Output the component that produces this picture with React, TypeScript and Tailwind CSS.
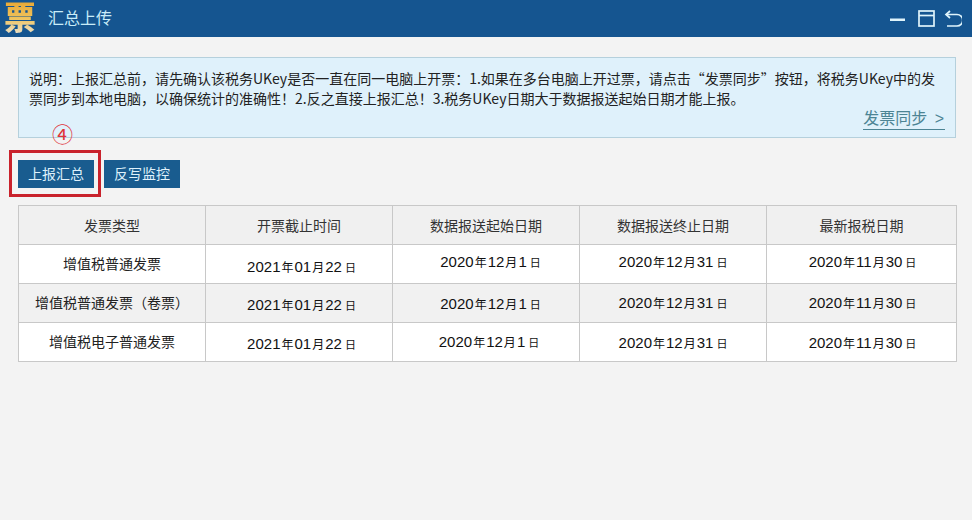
import React from 'react';

const font = { fontFamily: '"Liberation Sans", "Noto Sans CJK SC", sans-serif' };

const headers = ['发票类型', '开票截止时间', '数据报送起始日期', '数据报送终止日期', '最新报税日期'];

const DateText: React.FC<{ y: string; m: string; d: string }> = ({ y, m, d }) => (
  <span className="text-[15px] text-[#111]">
    {y}
    <span className="mx-[1px] text-[12px]">年</span>
    {m}
    <span className="mx-[1px] text-[12px]">月</span>
    {d}
    <span className="ml-[3px] text-[11px]">日</span>
  </span>
);

const rows = [
  {
    name: '增值税普通发票',
    bg: 'bg-white',
    cells: [
      { y: '2021', m: '01', d: '22', cls: 'pt-[6px] pl-[5px]' },
      { y: '2020', m: '12', d: '1', cls: 'pb-[3px] pl-[9px]' },
      { y: '2020', m: '12', d: '31', cls: 'pb-[3px]' },
      { y: '2020', m: '11', d: '30', cls: 'pb-[3px] pl-[2px]' },
    ],
  },
  {
    name: '增值税普通发票（卷票）',
    bg: 'bg-[#f1f1f1]',
    cells: [
      { y: '2021', m: '01', d: '22', cls: 'pt-[5px] pl-[5px]' },
      { y: '2020', m: '12', d: '1', cls: 'pt-[2px] pl-[9px]' },
      { y: '2020', m: '12', d: '31', cls: 'pt-[1px]' },
      { y: '2020', m: '11', d: '30', cls: 'pt-[1px] pl-[2px]' },
    ],
  },
  {
    name: '增值税电子普通发票',
    bg: 'bg-white',
    cells: [
      { y: '2021', m: '01', d: '22', cls: 'pt-[4px] pl-[5px]' },
      { y: '2020', m: '12', d: '1', cls: 'pl-[6px]' },
      { y: '2020', m: '12', d: '31', cls: 'pt-[3px]' },
      { y: '2020', m: '11', d: '30', cls: 'pt-[3px] pl-[2px]' },
    ],
  },
];

export default function App() {
  return (
    <div className="relative flex h-[520px] w-[972px] flex-col overflow-hidden bg-[#f3f3f3]" style={font}>
      <div className="flex h-[37px] shrink-0 items-center justify-between bg-[#155590]">
        <div className="flex items-center">
          <span className="ml-[3px] w-[34px] bg-gradient-to-b from-[#e8a52f] via-[#eec35c] to-[#ece6d6] bg-clip-text text-center text-[32px] leading-[37px] font-black text-transparent">
            票
          </span>
          <span className="ml-[11px] text-[16px] text-[#c9ecf8]">汇总上传</span>
        </div>
        <div className="mr-[10px] flex items-center text-[#dff4fb]">
          <svg width="15" height="4" viewBox="0 0 15 4" className="mt-[2px]">
            <rect x="0" y="0.5" width="15" height="2.5" fill="currentColor" />
          </svg>
          <svg width="17" height="17" viewBox="0 0 17 17" fill="none" stroke="currentColor" className="ml-[13px]">
            <rect x="1" y="1" width="15" height="15" strokeWidth="1.7" />
            <path d="M1 5.5h15" strokeWidth="1.7" />
          </svg>
          <svg width="18" height="18" viewBox="0 0 18 18" fill="none" stroke="currentColor" strokeWidth="1.7" className="ml-[9px]">
            <path d="M6 1 2 4.5 6 8" />
            <path d="M2 4.5h11a4.7 4.7 0 0 1 0 11.5H3" />
          </svg>
        </div>
      </div>

      <div className="flex flex-col px-[18px] pt-[20px]">
        <div className="relative h-[81px] w-[938px] border border-[#b5d0dc] bg-[#dff1fb] pt-[10px] pr-[16px] pl-[10px] text-[14px] leading-[20px] text-[#222]">
          <p className="font-['Noto_Sans_CJK_SC']">
            说明：上报汇总前，请先确认该税务UKey是否一直在同一电脑上开票：1.如果在多台电脑上开过票，请点击“发票同步”按钮，将税务UKey中的发票同步到本地电脑，以确保统计的准确性！2.反之直接上报汇总！3.税务UKey日期大于数据报送起始日期才能上报。
          </p>
          <span className="absolute right-[10px] bottom-[7px] border-b border-[#4c8494] pr-[1px] text-[16px] leading-[20px] text-[#4c8494]">
            发票同步 <span className="ml-[3px]">&gt;</span>
          </span>
        </div>

        <div className="mt-[22px] flex gap-[10px]">
          <button className="h-[28px] w-[76px] bg-[#195c8f] pt-[1px] text-[14px] text-[#dff1fb]">上报汇总</button>
          <button className="h-[28px] w-[76px] bg-[#195c8f] pt-[1px] text-[14px] text-[#dff1fb]">反写监控</button>
        </div>

        <table className="mt-[17px] w-[938px] table-fixed border-collapse text-center text-[14px] text-[#333]">
          <thead>
            <tr className="h-[39px] bg-[#f0f0f0]">
              {headers.map((h, i) => (
                <th key={h} className={`border border-[#c8c8c8] pt-[2px] font-normal ${i === 4 ? 'w-[190px]' : 'w-[187px]'}`}>
                  {h}
                </th>
              ))}
            </tr>
          </thead>
          <tbody>
            {rows.map((row) => (
              <tr key={row.name} className={`h-[39px] ${row.bg}`}>
                <td className="border border-[#c8c8c8] pt-[1px] text-[#222]">{row.name}</td>
                {row.cells.map((c, i) => (
                  <td key={i} className={`border border-[#c8c8c8] ${c.cls}`}>
                    <DateText y={c.y} m={c.m} d={c.d} />
                  </td>
                ))}
              </tr>
            ))}
          </tbody>
        </table>
      </div>

      {/* red annotation over the button */}
      <div className="absolute top-[150px] left-[9px] h-[47px] w-[92px] border-[3px] border-[#c9222c]" />
      <span className="absolute top-[122px] left-[52px] text-[21px] leading-[26px] text-[#e0323a]">④</span>
    </div>
  );
}
